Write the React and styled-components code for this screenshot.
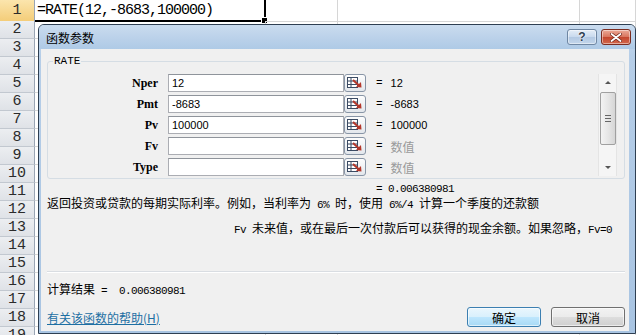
import styled, { createGlobalStyle, css } from "styled-components";

const GlobalStyle = createGlobalStyle`
  html, body { margin: 0; padding: 0; background: #fff; overflow: hidden; }
  body { font-family: "Noto Sans CJK SC", "Liberation Sans", sans-serif; }
`;

// SHEET
const Sheet = styled.div`
  position: relative;
  width: 636px;
  height: 335px;
  overflow: hidden;
  background: #fff;
`;

const SheetRow = styled.div`
  display: grid;
  grid-template-columns: 35px 231px 72px 242px 1fr;
  height: ${(p) => p.$h}px;
`;

const RowHead = styled.div`
  box-sizing: border-box;
  display: flex;
  align-items: center;
  justify-content: center;
  font: 15px "Liberation Mono", monospace;
  color: #2b2b2b;
  background: ${(p) => (p.$active ? "linear-gradient(#fbe5ad, #f4cd79)" : "linear-gradient(#eceef1, #dfe2e7)")};
  border-right: 1px solid #9aa5b4;
  border-bottom: 1px solid ${(p) => (p.$active ? "#d6a64c" : "#c2c8d0")};
`;

const Cell = styled.div`
  position: relative;
  box-sizing: border-box;
  border-right: 1px solid #d6d6d6;
  border-bottom: 1px solid #d6d6d6;
  ${(p) =>
    p.$selected &&
    css`
      border-right: 2px solid #000;
      border-bottom: 2px solid #000;
    `}
`;

const Formula = styled.div`
  padding: 1px 0 0 2px;
  font: 15px/19px "Liberation Mono", monospace;
  letter-spacing: -1px;
  color: #000;
  white-space: nowrap;
`;

const FillHandle = styled.span`
  position: absolute;
  right: -4px;
  bottom: -4px;
  width: 5px;
  height: 5px;
  background: #000;
  border: 1px solid #fff;
`;

// DIALOG
const Dialog = styled.div`
  position: absolute;
  left: 38px;
  top: 24px;
  width: 598px;
  height: 310px;
  box-sizing: border-box;
  display: flex;
  flex-direction: column;
  border: 1px solid #2e3f52;
  border-radius: 6px 6px 0 0;
  background: linear-gradient(180deg, #c8daee 0%, #b6cee8 10%, #a8c4e2 100%);
`;

const TitleBar = styled.div`
  height: 24px;
  flex: none;
  display: flex;
  align-items: center;
  padding: 0 4px 0 7px;
  background: linear-gradient(180deg, #cadcef 0%, #bcd2ea 50%, #aecae6 100%);
  border-radius: 5px 5px 0 0;
`;

const Title = styled.div`
  font: 12px "Noto Sans CJK SC", sans-serif;
  color: #000;
`;

const WinButtons = styled.div`
  margin-left: auto;
  display: flex;
  gap: 4px;
`;

const WinButton = styled.div`
  width: 30px;
  height: 16px;
  box-sizing: border-box;
  display: flex;
  align-items: center;
  justify-content: center;
  border-radius: 3px;
  border: 1px solid ${(p) => (p.$close ? "#7b2c20" : "#6f87a3")};
  background: ${(p) =>
    p.$close
      ? "linear-gradient(180deg, #ecaa98 0%, #d9765f 48%, #c4462e 52%, #d2684c 100%)"
      : "linear-gradient(180deg, #e4edf7 0%, #c9daee 48%, #b3c9e3 52%, #c3d6eb 100%)"};
  box-shadow: inset 0 0 0 1px rgba(255, 255, 255, 0.45);
`;

const HelpMark = styled.span`
  font: bold 12px "Liberation Sans", sans-serif;
  color: #2d3e52;
  text-shadow: 0 0 2px #fff, 0 0 1px #fff;
`;

const Client = styled.div`
  flex: 1;
  margin: 0 6px 2px 2px;
  padding: 6px 4px 0 6px;
  background: #f0f0f0;
  display: flex;
  flex-direction: column;
`;

const Group = styled.fieldset`
  margin: 0;
  padding: 6px 7px 2px 0;
  border: 1px solid #d5dde4;
  border-radius: 3px;
`;

const Legend = styled.legend`
  margin-left: 5px;
  padding: 0 1px;
  font: 11px/13px "Liberation Mono", monospace;
  color: #000;
`;

const ArgsArea = styled.div`
  display: flex;
`;

const ArgList = styled.div`
  display: flex;
  flex-direction: column;
  gap: 3px;
`;

const ArgRow = styled.div`
  display: flex;
  align-items: center;
  height: 18px;
`;

const ArgLabel = styled.div`
  width: 110px;
  text-align: right;
  font: bold 12px "Liberation Serif", serif;
  color: #000;
`;

const ArgInput = styled.input`
  margin: 0 0 0 10px;
  width: 176px;
  height: 18px;
  box-sizing: border-box;
  padding: 0 3px;
  border: 1px solid #abadb3;
  border-top-color: #8f949b;
  background: #fff;
  font: 11px "Liberation Sans", sans-serif;
  color: #000;
  outline: none;
`;

const RefButton = styled.div`
  width: 22px;
  height: 18px;
  box-sizing: border-box;
  display: flex;
  align-items: center;
  justify-content: center;
  border: 1px solid #8895a6;
  border-radius: 3px;
  background: linear-gradient(#fdfdfd, #e3e7ec);
`;

const Eq = styled.span`
  margin-left: 10px;
  font: 11px "Liberation Mono", monospace;
  color: #000;
`;

const ArgValue = styled.span`
  margin-left: 8px;
  font: ${(p) => (p.$hint ? `12px "Noto Sans CJK SC", sans-serif` : `11px "Liberation Sans", sans-serif`)};
  color: ${(p) => (p.$hint ? "#9a9a9a" : "#000")};
`;

const Scrollbar = styled.div`
  margin-left: auto;
  width: 19px;
  height: 102px;
  box-sizing: border-box;
  display: flex;
  flex-direction: column;
  align-items: center;
  background: #f5f5f5;
  border-left: 1px solid #e4e4e4;
  border-right: 1px solid #e4e4e4;
`;

const ArrowBox = styled.div`
  height: 17px;
  display: flex;
  align-items: center;
  justify-content: center;
`;

const Arrow = styled.span`
  width: 0;
  height: 0;
  border-left: 3px solid transparent;
  border-right: 3px solid transparent;
  ${(p) => (p.$down ? "border-top: 3px solid #555;" : "border-bottom: 3px solid #555;")}
`;

const Thumb = styled.div`
  margin-top: 1px;
  width: 16px;
  height: 53px;
  box-sizing: border-box;
  display: flex;
  align-items: center;
  justify-content: center;
  border: 1px solid #a0a0a0;
  border-radius: 2px;
  background: linear-gradient(90deg, #f3f3f3 0%, #e6e6e6 50%, #d6d6d6 100%);
`;

const Grip = styled.span`
  width: 6px;
  height: 7px;
  background: repeating-linear-gradient(180deg, #666 0 1px, transparent 1px 3px);
`;

const Spacer = styled.div`
  flex: 1;
`;

const FormulaResult = styled.div`
  margin: 3px 0 0 329px;
  font: 11px/14px "Liberation Mono", monospace;
  letter-spacing: -0.6px;
  color: #000;
  white-space: pre;
`;

const Desc = styled.div`
  margin: ${(p) => p.$m};
  font: 12px/14px "Noto Sans CJK SC", sans-serif;
  color: #000;
  white-space: pre;
`;

const Num = styled.span`
  font: 11px "Liberation Mono", monospace;
  letter-spacing: -0.6px;
`;

const Separator = styled.div`
  margin-top: 35px;
  height: 1px;
  background: #d9dde2;
  box-shadow: 0 1px 0 #fff;
`;

const ResultLine = styled.div`
  margin-top: 10px;
  font: 12px/14px "Noto Sans CJK SC", sans-serif;
  color: #000;
  white-space: pre;
`;

const BottomRow = styled.div`
  margin-top: 10px;
  display: flex;
  align-items: center;
  justify-content: space-between;
`;

const HelpLink = styled.a`
  font: 12px "Noto Sans CJK SC", sans-serif;
  color: #1d6fa3;
  text-decoration: underline;
  cursor: pointer;
`;

const Buttons = styled.div`
  display: flex;
  gap: 10px;
`;

const DlgButton = styled.button`
  width: 74px;
  height: 20px;
  box-sizing: border-box;
  padding: 0;
  border: 1px solid ${(p) => (p.$default ? "#3c7fb1" : "#707070")};
  border-radius: 3px;
  background: ${(p) =>
    p.$default
      ? "linear-gradient(#eaf6fd 0%, #d9f0fc 50%, #bee6fd 51%, #a7d9f5 100%)"
      : "linear-gradient(#f2f2f2 0%, #ebebeb 50%, #dddddd 51%, #cfcfcf 100%)"};
  box-shadow: inset 0 0 0 1px rgba(255, 255, 255, 0.6);
  font: 12px "Noto Sans CJK SC", sans-serif;
  color: #000;
`;

const RefIcon = () => (
  <svg width="16" height="12" viewBox="0 0 16 12">
    <rect x="0.5" y="0.5" width="10" height="10" fill="#fff" stroke="#3b4b63" />
    <line x1="0.5" y1="4" x2="10.5" y2="4" stroke="#3b4b63" />
    <line x1="0.5" y1="7.5" x2="10.5" y2="7.5" stroke="#3b4b63" />
    <line x1="4" y1="0.5" x2="4" y2="10.5" stroke="#3b4b63" />
    <line x1="6" y1="3" x2="12" y2="8.5" stroke="#b5372a" strokeWidth="2" />
    <polygon points="9,10 14.5,10.5 14,5" fill="#b5372a" />
  </svg>
);

const CloseIcon = () => (
  <svg width="12" height="9" viewBox="0 0 12 9">
    <path d="M1.5 1 L10.5 8 M10.5 1 L1.5 8" stroke="#6d2418" strokeWidth="3.2" strokeLinecap="round" />
    <path d="M1.5 1 L10.5 8 M10.5 1 L1.5 8" stroke="#fff" strokeWidth="1.8" strokeLinecap="round" />
  </svg>
);

const args = [
  { name: "Nper", input: "12", value: "12" },
  { name: "Pmt", input: "-8683", value: "-8683" },
  { name: "Pv", input: "100000", value: "100000" },
  { name: "Fv", input: "", value: "数值", hint: true },
  { name: "Type", input: "", value: "数值", hint: true },
];

const rows = Array.from({ length: 19 }, (_, i) => i + 1);

const App = () => {
  return (
    <Sheet>
      <GlobalStyle />
      {rows.map((n) => (
        <SheetRow key={n} $h={n === 1 ? 21 : 18}>
          <RowHead $active={n === 1}>{n}</RowHead>
          <Cell $selected={n === 1}>
            {n === 1 && (
              <>
                <Formula>=RATE(12,-8683,100000)</Formula>
                <FillHandle />
              </>
            )}
          </Cell>
          <Cell />
          <Cell />
          <Cell />
        </SheetRow>
      ))}

      <Dialog>
        <TitleBar>
          <Title>函数参数</Title>
          <WinButtons>
            <WinButton>
              <HelpMark>?</HelpMark>
            </WinButton>
            <WinButton $close>
              <CloseIcon />
            </WinButton>
          </WinButtons>
        </TitleBar>

        <Client>
          <Group>
            <Legend>RATE</Legend>
            <ArgsArea>
              <ArgList>
                {args.map((a) => (
                  <ArgRow key={a.name}>
                    <ArgLabel>{a.name}</ArgLabel>
                    <ArgInput readOnly value={a.input} />
                    <RefButton>
                      <RefIcon />
                    </RefButton>
                    <Eq>=</Eq>
                    <ArgValue $hint={a.hint}>{a.value}</ArgValue>
                  </ArgRow>
                ))}
              </ArgList>
              <Scrollbar>
                <ArrowBox>
                  <Arrow />
                </ArrowBox>
                <Thumb>
                  <Grip />
                </Thumb>
                <Spacer />
                <ArrowBox>
                  <Arrow $down />
                </ArrowBox>
              </Scrollbar>
            </ArgsArea>
          </Group>

          <FormulaResult>= 0.006380981</FormulaResult>
          <Desc $m="0">
            返回投资或贷款的每期实际利率。例如，当利率为<Num> 6% </Num>时，使用<Num> 6%/4 </Num>计算一个季度的还款额
          </Desc>
          <Desc $m="10px 0 0 187px">
            <Num>Fv </Num>未来值，或在最后一次付款后可以获得的现金余额。如果忽略，<Num>Fv=0</Num>
          </Desc>

          <Separator />

          <ResultLine>
            计算结果<Num> =  0.006380981</Num>
          </ResultLine>

          <BottomRow>
            <HelpLink>有关该函数的帮助(H)</HelpLink>
            <Buttons>
              <DlgButton $default>确定</DlgButton>
              <DlgButton>取消</DlgButton>
            </Buttons>
          </BottomRow>
        </Client>
      </Dialog>
    </Sheet>
  );
};

export default App;
